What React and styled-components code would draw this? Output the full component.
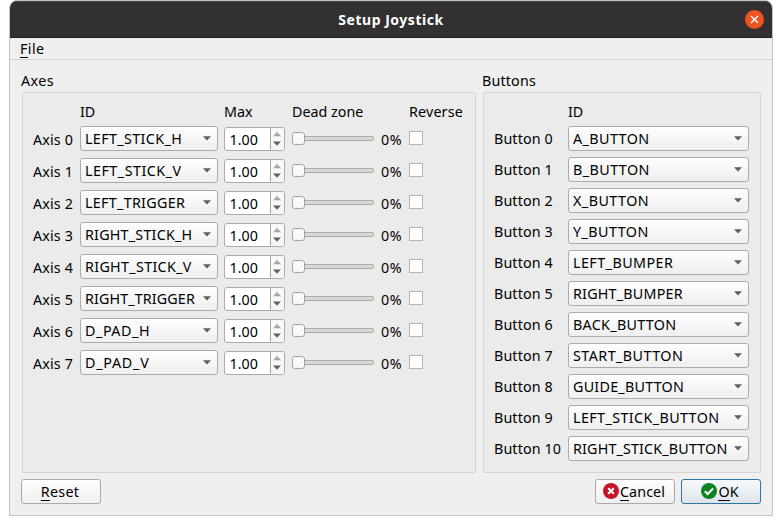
import React from "react";
import styled, { createGlobalStyle } from "styled-components";

const Global = createGlobalStyle`
  * { box-sizing: border-box; }
  body { margin: 0; background: #fff; overflow: hidden; }
`;

const Window = styled.main`
  width: 764px;
  height: 516px;
  margin-left: 9px;
  display: flex;
  flex-direction: column;
  border: 1px solid #c3c3c3;
  border-radius: 8px 8px 0 0;
  background: #efefef;
  overflow: hidden;
  color: #000;
  font: 14.3px/18px "Noto Sans", "Open Sans", sans-serif;
  white-space: nowrap;
`;

const TitleBar = styled.header`
  flex: none;
  height: 37px;
  display: grid;
  grid-template-columns: 27px 1fr 19px;
  align-items: center;
  padding-right: 8px;
  background: #323030;
  border-top: 1px solid #4a4948;
  border-bottom: 1px solid #1f1e1e;
`;

const Title = styled.h1`
  grid-column: 2;
  margin: 0;
  text-align: center;
  font-size: 14px;
  line-height: 18px;
  font-weight: 700;
  color: #fff;
  letter-spacing: 0.52px;
`;

const CloseButton = styled.button`
  width: 19px;
  height: 19px;
  padding: 0;
  border: 0;
  border-radius: 50%;
  background: #e95420;
  svg { display: block; }
`;

const MenuBar = styled.nav`
  flex: none;
  height: 22px;
  padding: 2px 10px;
  border-bottom: 1px solid #d3d3d3;
`;

const Label = styled.span`
  letter-spacing: ${(p) => p.$track || 0}px;
`;

const Mnemonic = styled.span`
  display: inline-block;
  height: 18px;
  border-bottom: 1px solid #000;
`;

const Body = styled.div`
  display: grid;
  grid-template-columns: 454px 278px;
  column-gap: 7px;
  padding: 12px 0 0 12px;
`;

const Group = styled.section`
  display: flex;
  flex-direction: column;
`;

const GroupTitle = styled.h2`
  margin: 0 0 2px -1px;
  height: 18px;
  font-size: inherit;
  font-weight: 400;
  letter-spacing: ${(p) => p.$track || 0}px;
`;

const Panel = styled.div`
  height: 381px;
  padding: 10px 0 0 10px;
  border: 1px solid #d4d4d4;
  border-radius: 2px;
  background: #ebebeb;
`;

const AxisRow = styled.div`
  display: grid;
  grid-template-columns: 47px 144px 68px 89px 28px 60px;
  height: ${(p) => (p.$header ? 23 : 32)}px;
  align-items: start;
`;

const ButtonRow = styled.div`
  display: grid;
  grid-template-columns: 74px 181px;
  height: ${(p) => (p.$header ? 23 : 31)}px;
  align-items: start;
`;

const Cell = styled.span`
  padding-top: ${(p) => p.$drop || 0}px;
  letter-spacing: ${(p) => p.$track || 0}px;
`;

const Combo = styled.div`
  width: ${(p) => p.$width}px;
  height: 25px;
  display: flex;
  align-items: center;
  justify-content: space-between;
  padding: 0 6px 0 4px;
  border: 1px solid #ababab;
  border-radius: 3px;
  background: linear-gradient(#fefefe, #efefef);
`;

const ComboText = styled.span`
  max-width: 155px;
  overflow: hidden;
  letter-spacing: ${(p) => p.$track || 0}px;
`;

const Spin = styled.div`
  width: 61px;
  height: 24px;
  margin-top: 1px;
  display: grid;
  grid-template-columns: 46px 13px;
  border: 1px solid #ababab;
  border-radius: 3px;
  background: #fff;
  overflow: hidden;
`;

const SpinValue = styled.span`
  padding: 3px 0 0 4.5px;
  border-right: 1px solid #ababab;
`;

const SpinArrows = styled.span`
  display: flex;
  align-items: center;
  padding-left: 2px;
  background: #f8f8f8;
`;

const Slider = styled.div`
  height: 13px;
  width: 82px;
  margin-top: 6px;
  display: flex;
  align-items: center;
`;

const Handle = styled.span`
  flex: none;
  width: 13px;
  height: 13px;
  border: 1px solid #a5a5a5;
  border-radius: 3px;
  background: linear-gradient(#fff, #f5f5f5);
`;

const Groove = styled.span`
  flex: 1;
  height: 5px;
  border: 1px solid #ababab;
  border-left: 0;
  border-radius: 0 2px 2px 0;
  background: #d8d8d8;
`;

const Check = styled.span`
  width: 14px;
  height: 14px;
  margin-top: 5px;
  border: 1px solid #b4b4b4;
  background: #fff;
`;

const Footer = styled.footer`
  display: flex;
  gap: 6px;
  padding: 6px 11px 0;
`;

const PushButton = styled.button`
  width: 80px;
  height: 25px;
  display: flex;
  align-items: center;
  justify-content: center;
  gap: 1px;
  padding: 0 2px 0 0;
  margin-right: ${(p) => (p.$pushRest ? "auto" : 0)};
  border: 1px solid ${(p) => (p.$primary ? "#2f76a3" : "#ababab")};
  border-radius: 3px;
  background: ${(p) => (p.$primary ? "linear-gradient(#f7fafc, #dde4e9)" : "linear-gradient(#fefefe, #efefef)")};
  color: #000;
  font: inherit;
  svg { flex: none; margin-top: -1px; }
`;

const DownArrow = () => (
  <svg width="8" height="5" viewBox="0 0 8 5"><path d="M0 .3h8L4 4.5z" fill="#606060" /></svg>
);

const StatusIcon = ({ color, d }) => (
  <svg width="16" height="16" viewBox="0 0 16 16">
    <circle cx="8" cy="8" r="8" fill={color} />
    <path d={d} fill="none" stroke="#fff" strokeWidth="2" />
  </svg>
);

const axes = [
  ["LEFT_STICK_H", 0.38], ["LEFT_STICK_V", 0.5], ["LEFT_TRIGGER", 0.3], ["RIGHT_STICK_H", 0.22],
  ["RIGHT_STICK_V", 0.32], ["RIGHT_TRIGGER", 0.12], ["D_PAD_H", 0.55], ["D_PAD_V", 0.75],
];

const buttons = [
  ["A_BUTTON", 0.42], ["B_BUTTON", 0.45], ["X_BUTTON", 0.47], ["Y_BUTTON", 0.45], ["LEFT_BUMPER", 0.45],
  ["RIGHT_BUMPER", 0.22], ["BACK_BUTTON", 0.3], ["START_BUTTON", 0.45], ["GUIDE_BUTTON", 0.25],
  ["LEFT_STICK_BUTTON", 0.4], ["RIGHT_STICK_BUTTON", 0.16],
];

const ComboBox = ({ text, track, width }) => (
  <Combo $width={width}>
    <ComboText $track={track}>{text}</ComboText>
    <DownArrow />
  </Combo>
);

export default function App() {
  return (
    <>
      <Global />
      <Window>
        <TitleBar>
          <Title>Setup Joystick</Title>
          <CloseButton aria-label="Close">
            <svg width="19" height="19" viewBox="0 0 19 19">
              <path d="M6 6l7 7M13 6l-7 7" stroke="#fff" strokeWidth="1.4" />
            </svg>
          </CloseButton>
        </TitleBar>
        <MenuBar><Label $track={0.4}><Mnemonic>F</Mnemonic>ile</Label></MenuBar>
        <Body>
          <Group>
            <GroupTitle $track={0.4}>Axes</GroupTitle>
            <Panel>
              <AxisRow $header>
                <span />
                <Cell>ID</Cell>
                <Cell>Max</Cell>
                <Cell>Dead zone</Cell>
                <span />
                <Cell $track={0.15}>Reverse</Cell>
              </AxisRow>
              {axes.map(([name, track], i) => (
                <AxisRow key={name}>
                  <Cell $drop={5} $track={0.16}>Axis {i}</Cell>
                  <ComboBox text={name} track={track} width={138} />
                  <Spin>
                    <SpinValue>1.00</SpinValue>
                    <SpinArrows>
                      <svg width="8" height="14" viewBox="0 0 8 14">
                        <path d="M0 4.2h8L4 0z" fill="#a5a5a5" />
                        <path d="M0 9.5h8L4 13.7z" fill="#606060" />
                      </svg>
                    </SpinArrows>
                  </Spin>
                  <Slider><Handle /><Groove /></Slider>
                  <Cell $drop={5} $track={0.5}>0%</Cell>
                  <Check />
                </AxisRow>
              ))}
            </Panel>
          </Group>
          <Group>
            <GroupTitle $track={0.16}>Buttons</GroupTitle>
            <Panel>
              <ButtonRow $header>
                <span />
                <Cell>ID</Cell>
              </ButtonRow>
              {buttons.map(([name, track], i) => (
                <ButtonRow key={name}>
                  <Cell $drop={4} $track={0.12}>Button {i}</Cell>
                  <ComboBox text={name} track={track} width={181} />
                </ButtonRow>
              ))}
            </Panel>
          </Group>
        </Body>
        <Footer>
          <PushButton $pushRest><Label $track={0.3}><Mnemonic>R</Mnemonic>eset</Label></PushButton>
          <PushButton>
            <StatusIcon color="#c7162b" d="M5.2 5.2l5.6 5.6M10.8 5.2l-5.6 5.6" />
            <Label $track={0.12}><Mnemonic>C</Mnemonic>ancel</Label>
          </PushButton>
          <PushButton $primary>
            <StatusIcon color="#0e8420" d="M3.8 8.2l2.9 2.8 5.4-5.6" />
            <Label><Mnemonic>O</Mnemonic>K</Label>
          </PushButton>
        </Footer>
      </Window>
    </>
  );
}
